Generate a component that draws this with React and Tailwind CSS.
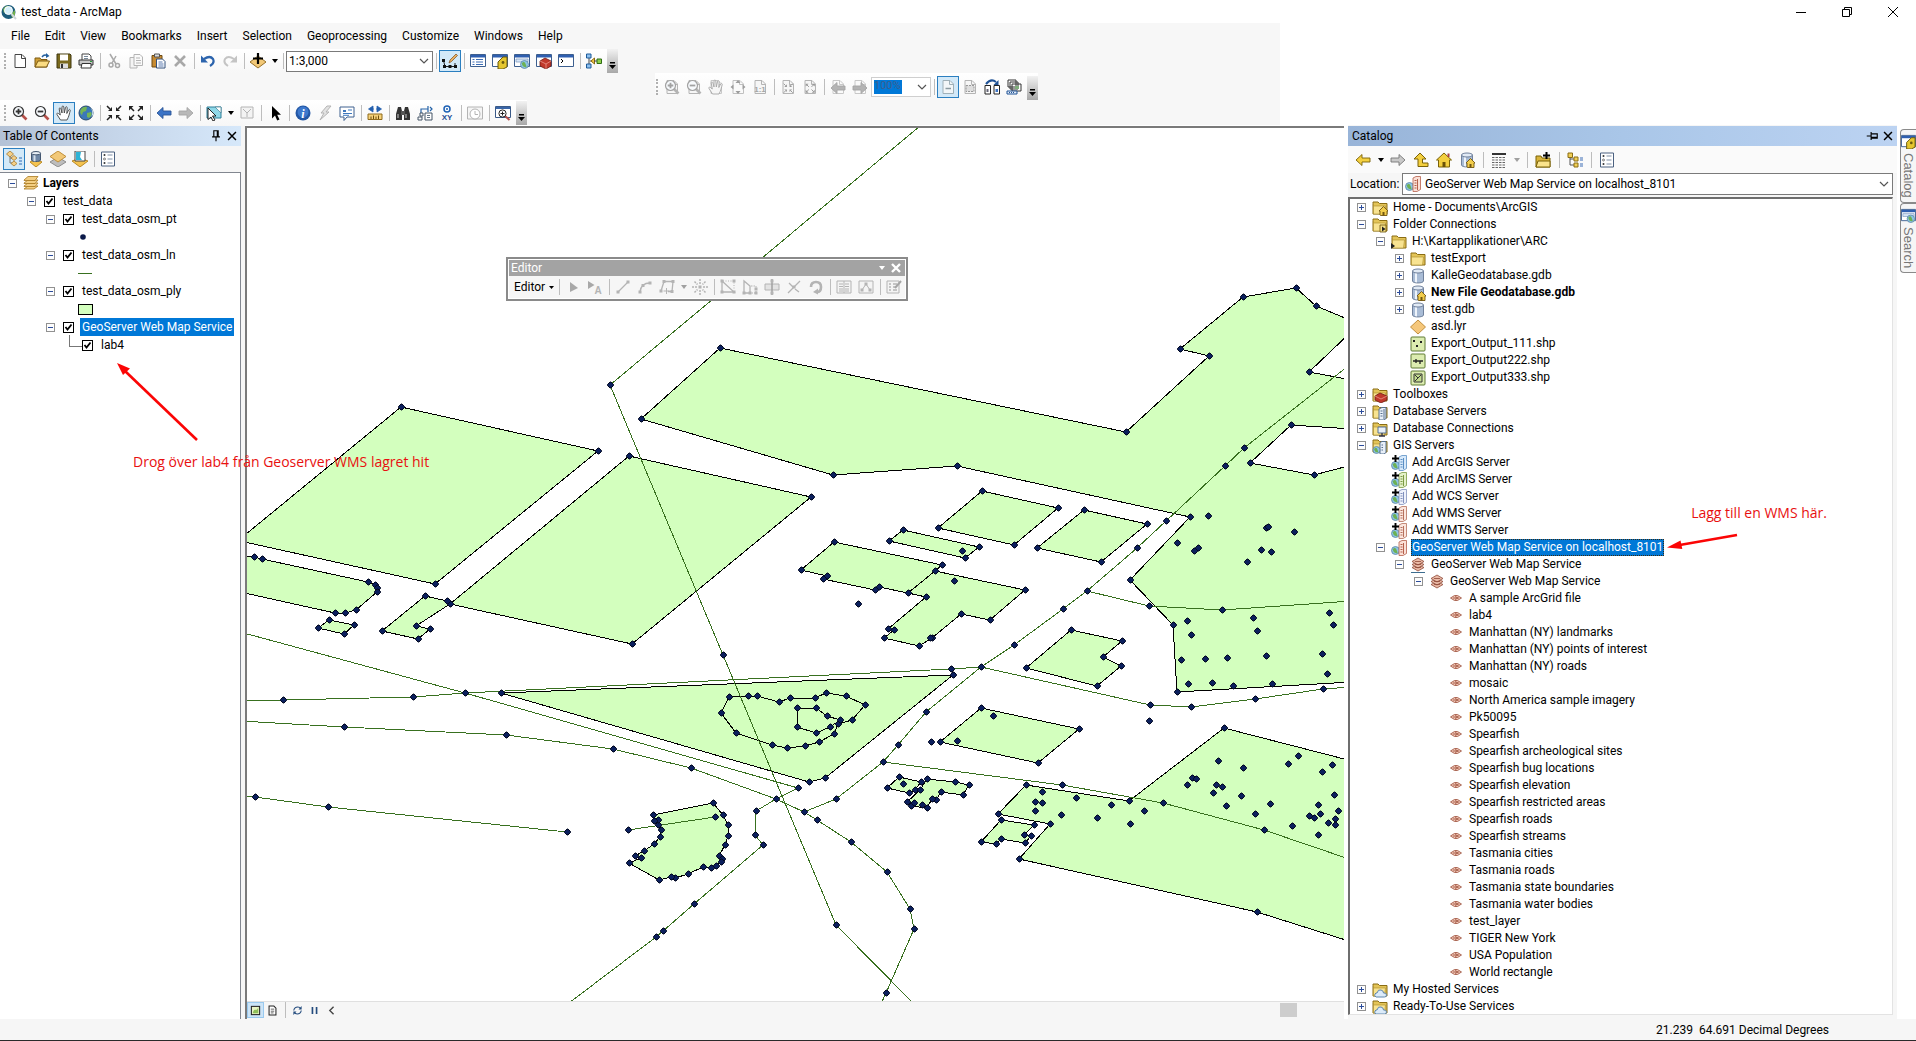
import React from "react";

/* ---------- icons ---------- */

const page = (c = "#555", f = "#fff") => (
  <>
    <path d="M3 1.5h7l3.500 3.500v9.500H3z" fill={f} stroke={c} />
    <path d="M9.500 1.500v4h4" fill="none" stroke={c} />
  </>
);
const win = (
  <>
    <path d="M.5 1.500h15v12H.5z" fill="#fff" stroke="#3d5f8f" />
    <path d="M1 2h14v2.500H1z" fill="#2f5fb0" />
  </>
);
const folder = (
  <>
    <path d="M1 3.500V2h5l1.500 1.500H15V14H1z" fill="#e3c458" stroke="#8a6d14" />
    <path d="M1.500 6h12l-1 8H1.500z" fill="#f8e391" stroke="#a88a2a" strokeWidth=".6" />
  </>
);
const cylinder = (
  <>
    <path d="M2.500 3v10c0 2.600 11 2.600 11 0V3z" fill="#a9bcd6" stroke="#70819c" />
    <path d="M5 5v9l2 .5V5z" fill="#eef4fb" />
    <ellipse cx="8" cy="3" rx="5.500" ry="2" fill="#e1eaf5" stroke="#70819c" />
  </>
);
const house = (
  <>
    <path d="M8 15V11h-1l4.500-4.500L16 11h-1v4.500H8.500z" fill="#f2cd4b" stroke="#705510" strokeWidth=".9" />
    <path d="M10.500 12h2v3.500h-2z" fill="#705510" />
  </>
);
const globeAt = (cx, cy, r) => (
  <>
    <circle cx={cx} cy={cy} r={r} fill="#8cc3e6" stroke="#5d86a3" strokeWidth=".8" />
    <path d={`M${cx - r * 0.7} ${cy - r * 0.3}q${r * 0.6} ${-r * 0.7} ${r * 0.9} 0t${r * 0.3} ${r * 0.9}q${-r * 0.9} ${r * 0.3} ${-r * 1.2} ${-r * 0.9}`} fill="#6db154" />
  </>
);
const server = (fill, line) => (
  <>
    {globeAt(4.5, 10.5, 4)}
    <path d="M8 2l3-1.500h4.500v13L12 15.500H8z" fill={fill} stroke={line} strokeWidth=".8" />
    <path d="M12.500 3v11M9.500 4.500h2M9.500 7h2M9.500 9.500h2M9.500 12h2" stroke={line} fill="none" />
  </>
);
const plus = <path d="M4.500 0v7M1 3.500h7" stroke="#000" strokeWidth="1.900" fill="none" />;
const lens = (sign, c = "#333", h = "#b5504a") => (
  <>
    <path d="M10 10l4.500 4.500" stroke={h} strokeWidth="2.600" />
    <circle cx="6.500" cy="6.500" r="5" fill="#f7fafd" stroke={c} strokeWidth="1.200" />
    <path d={sign === "+" ? "M6.500 3.700v5.600M3.700 6.500h5.600" : "M3.700 6.500h5.600"} stroke={c} strokeWidth="1.800" />
  </>
);
const handPath = "M4.500 15L1 9.500c-.6-1.300.8-1.800 1.500-1L4.300 10 3.200 4c-.2-1.400 1.400-1.500 1.700-.3L6 8 6 2c0-1.300 1.700-1.300 1.800 0L8.300 8 9.500 2.500c.3-1.200 1.800-.9 1.700.4L10.800 8.500 12.600 5c.6-1.100 1.900-.5 1.600.6-.7 2.700-1.200 5.900-3.200 9.400z";
const arrowL = (f, s) => <path d="M1 8l6-5.500V6h8v4H7v3.500z" fill={f} stroke={s} strokeWidth=".9" />;
const arrowR = (f, s) => <path d="M15 8L9 2.500V6H1v4h8v3.500z" fill={f} stroke={s} strokeWidth=".9" />;
const inArrows = (c) => (
  <g stroke={c} fill={c} strokeWidth="1.500">
    <path d="M1 1l3 3M15 1l-3 3M1 15l3-3M15 15l-3-3" />
    <path d="M6 2v4H2zM10 2v4h4zM6 14v-4H2zM10 14v-4h4z" stroke="none" />
  </g>
);
const outArrows = (c) => (
  <g stroke={c} fill={c} strokeWidth="1.500">
    <path d="M3 3l3 3M13 3l-3 3M3 13l3-3M13 13l-3-3" />
    <path d="M1 1h4.500L1 5.500zM15 1h-4.500L15 5.500zM1 15h4.500L1 10.500zM15 15h-4.500L15 10.500z" stroke="none" />
  </g>
);
const G = "#b4b4b4";
const nodes = (pts, c = G) => pts.map(([x, y]) => <rect key={`${x}-${y}`} x={x - 1.5} y={y - 1.5} width="3" height="3" fill={c} />);
const stack = (
  <g fill="#e9b9a6" stroke="#8f4a38" strokeWidth=".8">
    <path d="M2 10.500l6-3 6 3-6 3.500z" />
    <path d="M2 7.500l6-3 6 3L8 11z" />
    <path d="M2 4.500l6-3.500 6 3.500L8 8z" />
    <path d="M5 4.500h6M5 7.500h6M5 10.500h6" />
  </g>
);

const ICONS = {
  app: (
    <>
      <circle cx="7.500" cy="8" r="7" fill="#1c5c7c" />
      <path d="M2 5q3-4 6-3l-2 4-3 3zM10 10l4-4v5l-3 3z" fill="#6fae4c" />
      <circle cx="7.500" cy="6.500" r="4" fill="#d4effa" stroke="#fff" />
      <path d="M10.500 10l4.500 5" stroke="#cfd6da" strokeWidth="2" />
    </>
  ),
  fresh: page("#444"),
  open: (
    <>
      <path d="M1 14V5h5l1 1.500h6V14z" fill="#cf9f35" stroke="#7c5a13" />
      <path d="M1 14l3-6h11.500l-3 6z" fill="#fbdc82" stroke="#7c5a13" />
      <path d="M8 4q2-3 5-1.500" fill="none" stroke="#235f9e" strokeWidth="1.400" />
      <path d="M12 0l3.500 3L12 5z" fill="#235f9e" />
    </>
  ),
  save: (
    <>
      <path d="M1 1h13l1 1v13H1z" fill="#7b6a1e" stroke="#3f3710" />
      <path d="M4 1.500h8v6H4z" fill="#fff" />
      <path d="M4 10.500h8V15H4z" fill="#ddd" />
      <path d="M5 11h2v4H5z" fill="#333" />
    </>
  ),
  print: (
    <>
      <path d="M4 1h7l2 2v5H4z" fill="#fff" stroke="#444" />
      <path d="M1 7h14v5H1z" fill="#c9c9c9" stroke="#333" />
      <path d="M4 10.500h9v4.500H3z" fill="#fff" stroke="#333" />
      <path d="M12 8.500h2" stroke="#2a9d3a" />
      <path d="M6 3.500h4M6 5.500h4" stroke="#789" />
    </>
  ),
  cut: (
    <g stroke="#a9a9a9" fill="none" strokeWidth="1.500">
      <path d="M4 1l6 10M10 3L6 10" />
      <circle cx="5" cy="12" r="2" />
      <circle cx="11.500" cy="12.500" r="2" />
    </g>
  ),
  copy: (
    <>
      <path d="M2 4.500h7V15H2z" fill="#f4f4f4" stroke={G} />
      <path d="M6 1.500h6l2.500 2.500v8.500H6z" fill="#fafafa" stroke={G} />
      <path d="M8 5h4M8 7.500h5M8 10h5" stroke={G} />
    </>
  ),
  paste: (
    <>
      <path d="M2 2.500h10V14H2z" fill="#c78b32" stroke="#6e4a12" />
      <path d="M4.500 1h5v3h-5z" fill="#ddd" stroke="#555" />
      <path d="M6.500 6h6l2.500 2.500V15H6.500z" fill="#fff" stroke="#33507c" />
      <path d="M8.500 9h4M8.500 11h5M8.500 13h5" stroke="#5a7bb0" />
    </>
  ),
  del: <path d="M3 3l10 10M13 3L3 13" stroke="#a8a8a8" strokeWidth="2.600" />,
  undo: (
    <>
      <path d="M4 6q6-4 9 0 2 4-3 7" fill="none" stroke="#2c64ad" strokeWidth="2.200" />
      <path d="M1 2.500v7h7z" fill="#2c64ad" />
    </>
  ),
  redo: (
    <>
      <path d="M12 6Q6 2 3 6q-2 4 3 7" fill="none" stroke="#c4c4c4" strokeWidth="2" />
      <path d="M15 2.500v7H8z" fill="#c4c4c4" />
    </>
  ),
  add: (
    <>
      <path d="M8 3l8 6-8 6-8-6z" fill="#f2c877" stroke="#96702a" />
      <path d="M8 0v11M3 5.500h10" stroke="#000" strokeWidth="2.200" />
    </>
  ),
  editorToggle: (
    <>
      <path d="M1.500 7.500l1.500 6h10V10" fill="none" stroke="#222" />
      {nodes([[1.5, 7.5], [2.5, 13.5], [8, 13.5], [13.5, 13.5]], "#111")}
      <path d="M7 10l1-3 6-6 1.500 1.500-6 6z" fill="#eab060" stroke="#7a4a1c" strokeWidth=".7" />
    </>
  ),
  winToc: (
    <>
      {win}
      <path d="M2.500 6.500h2M2.500 9h2M2.500 11.500h2M6 6.500h7M6 9h7M6 11.500h7" stroke="#3c6db5" />
    </>
  ),
  winCat: (
    <>
      {win}
      <path d="M6 9l5-5h4v10l-4 2H6z" fill="#e5c62e" stroke="#6b5a0c" />
      <circle cx="11" cy="9.500" r="1.400" fill="#6b5a0c" />
    </>
  ),
  winSearch: (
    <>
      {win}
      <path d="M2 6h12v3H2z" fill="#d7e6f8" stroke="#7a96bd" strokeWidth=".7" />
      {globeAt(10.5, 11.5, 4)}
    </>
  ),
  winBox: (
    <>
      {win}
      <path d="M4 8l5-3 6 3v5l-5 3-6-3z" fill="#c0392b" stroke="#6f1b12" strokeWidth=".8" />
      <path d="M4 8l6 3 5-3M10 11v5" stroke="#f0a49a" fill="none" strokeWidth=".7" />
    </>
  ),
  winPy: (
    <>
      {win}
      <path d="M3 6l2 2-2 2" fill="none" stroke="#000" />
    </>
  ),
  model: (
    <>
      <path d="M3 3v10M4 8h3" stroke="#444" fill="none" />
      <path d="M.5 1h4.500v4H.5zM.5 11h4.500v4H.5z" fill="#8ec0ee" stroke="#1d5a99" />
      <path d="M5 8l3.500-3v6z" fill="#f5c945" stroke="#8a6a10" />
      <path d="M8 8h3" stroke="#444" />
      <path d="M11 6h4.500v4.500H11z" fill="#8fd14a" stroke="#2f6d12" />
    </>
  ),
  zin: lens("+"),
  zout: lens("-"),
  hand: <path d={handPath} fill="#fff" stroke="#444" strokeWidth=".9" />,
  globe: (
    <>
      <circle cx="8" cy="8" r="7" fill="#3c78b8" stroke="#27496b" />
      <path d="M3 4q3-3 6-2l-1 4-3 1-1 3q-3-2-1-6zM9 8l4-1q2 3-2 6l-2-1z" fill="#74b555" />
      <path d="M12 2q4 5 1 10l2-2q1-5-3-8z" fill="#cfe6f8" />
    </>
  ),
  fin: inArrows("#222"),
  fout: outArrows("#222"),
  backBlue: arrowL("#3c74c6", "#2a5596"),
  fwdGrey: arrowR("#b9b9b9", "#a5a5a5"),
  selFeat: (
    <>
      <path d="M1 2h14v11H1z" fill="#8fd8e8" stroke="#2f7f98" />
      <path d="M9 2l6 0v6z" fill="#fff" stroke="#3f7f94" strokeWidth=".7" />
      <path d="M2 3l8 8H6.500L9 15l-2 1-2-4-3 2.500z" fill="#fff" stroke="#111" strokeWidth=".9" />
    </>
  ),
  clearSel: (
    <>
      <path d="M2 2h12v11H2z" fill="#f3f3f3" stroke={G} />
      <path d="M4 4l4 4v4M12 4L8 8" stroke={G} fill="none" />
    </>
  ),
  pointer: <path d="M5 1v12.500l3-3 2.200 5 2.300-1-2.300-4.700H14z" fill="#000" />,
  info: (
    <>
      <circle cx="8" cy="8" r="7.500" fill="#2357a5" />
      <circle cx="8" cy="7" r="5.500" fill="#3d78cc" />
      <text x="8" y="12.500" textAnchor="middle" fontSize="12" fontStyle="italic" fontWeight="bold" fill="#fff" fontFamily="Liberation Serif">i</text>
    </>
  ),
  bolt: <path d="M10 1L4 8h3l-4 7 9-8H9l5-6z" fill="#e2e2e2" stroke={G} />,
  popup: (
    <>
      <path d="M1 2h14v10H8l-3 3.500V12H1z" fill="#fff" stroke="#3f618f" />
      <path d="M4 5h3v2H4z" fill="#3f78bd" />
      <path d="M9 5h4M4 8.500h9M4 10.300h6" stroke="#3f78bd" />
    </>
  ),
  measure: (
    <>
      <path d="M1 9h14v5.500H1z" fill="#f6d27a" stroke="#8f6a1a" />
      <path d="M4 14v-2.500M6.500 14v-3.500M9 14v-2.500M11.500 14v-3.500" stroke="#6d4d0c" />
      <path d="M6 1L1.500 4 6 7zM10 1l4.500 3L10 7zM5 4h2M9 4h2" fill="#235fae" stroke="#235fae" strokeWidth=".8" />
    </>
  ),
  bino: (
    <>
      <path d="M3 2h3l1 4v9H1V9zM13 2h-3L9 6v9h6V9z" fill="#333" />
      <path d="M6 6h4v4H6z" fill="#555" />
      <path d="M3 9v4M11 9v4" stroke="#ccc" />
    </>
  ),
  route: (
    <>
      <path d="M4 8V4h7M11 1v6M13 2l2 2-2 2" fill="none" stroke="#2563a8" strokeWidth="1.200" />
      <path d="M3 8h3v3H3zM8 8h7v7H8zM1 12h4v3H1z" fill="#fff" stroke="#456" />
      <path d="M10 10.500h3M10 12.500h3" stroke="#678" />
    </>
  ),
  xy: (
    <>
      <circle cx="8" cy="4" r="3" fill="#fff" stroke="#1f62b5" strokeWidth="1.500" />
      <circle cx="8" cy="4" r="1" fill="#1f62b5" />
      <text x="8" y="14.500" textAnchor="middle" fontSize="8" fontWeight="bold" fill="#1f4f97" fontFamily="Liberation Sans">XY</text>
    </>
  ),
  time: (
    <>
      <path d="M.5 2h15v12H.5z" fill="#f5f5f5" stroke={G} />
      <circle cx="8" cy="9" r="5" fill="#fff" stroke={G} />
      <path d="M8 6v3.500h3" stroke={G} fill="none" />
    </>
  ),
  viewer: (
    <>
      <path d="M.5 1.500h15v11H.5z" fill="#fff" stroke="#3a5a88" />
      <path d="M1 2h14v2H1z" fill="#3a66a8" />
      <path d="M10 11l4.500 4" stroke="#b5504a" strokeWidth="2" />
      <circle cx="7.500" cy="8.500" r="3.600" fill="#fff" stroke="#222" />
      <path d="M7.500 6.500v4M5.500 8.500h4" stroke="#222" />
    </>
  ),
  pzin: (<>{page(G, "#f6f6f6")}{lens("+", "#a2a2a2", G)}</>),
  pzout: (<>{page(G, "#f6f6f6")}{lens("-", "#a2a2a2", G)}</>),
  pHand: (<>{page("#c8c8c8", "#fafafa")}<path d={handPath} fill="#f6f6f6" stroke="#a5a5a5" strokeWidth=".9" /></>),
  pFull: (<>{page("#c0c0c0", "#fafafa")}<path d="M8 1l2.500 3h-5zM8 15l2.500-3h-5zM.5 8l3-2.500v5zM15.500 8l-3-2.500v5z" fill="#9d9d9d" /></>),
  pOne: (<>{page(G, "#f6f6f6")}<text x="8" y="13" textAnchor="middle" fontSize="8" fontWeight="bold" fill="#a5a5a5" fontFamily="Liberation Sans">1:1</text></>),
  pIn: (<>{page(G, "#f6f6f6")}<g transform="translate(3 4) scale(.65)">{inArrows("#999")}</g></>),
  pOut: (<>{page(G, "#f6f6f6")}<g transform="translate(3 4) scale(.65)">{outArrows("#999")}</g></>),
  pBack: (<>{page("#c8c8c8", "#fafafa")}<g transform="translate(0 1)">{arrowL(G, "#a5a5a5")}</g></>),
  pFwd: (<>{page("#c8c8c8", "#fafafa")}<g transform="translate(0 1)">{arrowR(G, "#a5a5a5")}</g></>),
  draft: (<>{page("#9fb0b8", "#f2f6f8")}<path d="M5.500 9.500h5.500" stroke="#8b9aa1" strokeWidth="1.500" /></>),
  focus: (<>{page(G, "#f6f6f6")}<path d="M4 6.500h8v6H4z" fill="#ddd" stroke="#999" strokeDasharray="2 1" /></>),
  change: (
    <>
      <path d="M1 6.500h5.500V15H1zM10 6.500h5.500V15H10z" fill="#fff" stroke="#222" />
      <path d="M2.500 10h2v3h-2z" fill="#667" />
      <path d="M11.500 10h2.500v3h-2.500z" fill="#3c74c6" />
      <path d="M2 5q5-6 10-2" fill="none" stroke="#1f5296" strokeWidth="2" />
      <path d="M14.500 1v5H9.500z" fill="#1f5296" />
    </>
  ),
  ddp: (
    <>
      <path d="M2 1h8v7H2zM4 3h8v7H4zM6 5h9v7H6z" fill="#fff" stroke="#333" />
      <path d="M9 7h4v3H9z" fill="#7fae7a" />
      <path d="M1 12h10v3H1z" fill="#e4edf8" stroke="#1f5296" />
      <path d="M3 13.500h1M5 13.500h1M7 13.500h1" stroke="#1f5296" />
    </>
  ),
  eArrow: <path d="M5 3v10l8-4z" fill="#a8a8a8" />,
  eText: (
    <>
      <path d="M1 2v8l6.500-4z" fill="#a8a8a8" />
      <text x="11" y="15" textAnchor="middle" fontSize="10" fontWeight="bold" fill="#b4b4b4" fontFamily="Liberation Sans">A</text>
    </>
  ),
  eLine: (<><path d="M3 13L13 3" stroke={G} strokeWidth="1.300" />{nodes([[3, 13], [13, 3]])}</>),
  eArc: (<><path d="M3 13q1-9 10-9" fill="none" stroke={G} strokeWidth="1.300" />{nodes([[3, 13], [6, 6.5], [13, 4]])}</>),
  ePoly: (<><path d="M2 12L5 2.500h9l-1 10H9" fill="none" stroke={G} strokeWidth="1.300" />{nodes([[5, 2.5], [14, 2.5], [13, 12.5], [2, 12]])}<path d="M7.500 9v6M4.500 12h6" stroke={G} /></>),
  ePoint: (<><path d="M8 0v5M8 11v5M0 8h5M11 8h5M2.500 2.500l3 3M13.500 2.500l-3 3M2.500 13.500l3-3M13.500 13.500l-3-3" stroke={G} strokeDasharray="2 1" strokeWidth="1.500" />{nodes([[8, 8]])}</>),
  eVert: (<><path d="M2 2l12 11H2z" fill="none" stroke={G} strokeWidth="1.300" /><path d="M3 2h11v9" fill="none" stroke={G} strokeDasharray="1 1.500" />{nodes([[2, 2], [14, 13], [2, 13], [14, 2]])}</>),
  eReshape: (<><path d="M2 14V2l6 5v7z" fill="none" stroke={G} strokeWidth="1.300" /><path d="M9 7h5v7H9" fill="none" stroke={G} strokeDasharray="1.500 1" />{nodes([[2, 14], [8, 14], [14, 10], [14, 14]])}</>),
  eCut: (<><path d="M1 5h14v6H1z" fill="#e3e3e3" stroke={G} /><path d="M8 0v16" stroke="#a0a0a0" strokeWidth="1.500" />{nodes([[8, 2], [8, 14]])}</>),
  eSplit: (<><path d="M2 14L14 2M3 4l4 4M9 10l4 3" stroke={G} strokeWidth="1.300" />{nodes([[8, 8]])}</>),
  eRotate: (<><path d="M3 8q0-5 5-5t5 5-4 5" fill="none" stroke={G} strokeWidth="2.600" /><path d="M10 9.500v6L5 13z" fill={G} /></>),
  eAttr: (<><path d="M1 2h14v12H1z" fill="#f4f4f4" stroke={G} /><path d="M3 5h4M3 7.500h4M3 10h4M3 12h4M9 5h4M9 7.500h4M9 10h4M9 12h4" stroke={G} /><path d="M8 2v12" stroke={G} /></>),
  eSketch: (<><path d="M1 2h14v12H1z" fill="#f4f4f4" stroke={G} /><path d="M4 11l4-6 4 6" fill="none" stroke={G} />{nodes([[4, 11], [8, 5], [12, 11]])}</>),
  eCreate: (<><path d="M1 2h12v12H1z" fill="#f4f4f4" stroke={G} /><path d="M3 5h2M3 8h2M3 11h2M7 5h4M7 8h3M7 11h4" stroke={G} strokeWidth="1.500" /><path d="M9 9l6-7" stroke="#a5a5a5" strokeWidth="2" /></>),
  listBy: (
    <>
      <path d="M4 4v8h4M4 7l5 0" fill="none" stroke="#777" />
      <path d="M4 0l3.500 3L4 6 .5 3zM8 4.500l3 2.500-3 2.500L5 7zM8 10l3 2.500L8 15l-3-2.500z" fill="#f4cf87" stroke="#a77a2d" strokeWidth=".8" />
      <path d="M13 7h3M13 10h3M13 13h3" stroke="#2d69b5" strokeWidth="1.200" />
    </>
  ),
  listSource: (
    <>
      <path d="M2 11l6-3 6 3-6 5z" fill="#f4c24f" stroke="#b98a25" />
      <path d="M3.500 2v7c0 2 9 2 9 0V2z" fill="#6e86a5" stroke="#43566f" />
      <path d="M5.500 4v6l2 .5V4z" fill="#d3deea" />
      <ellipse cx="8" cy="2.200" rx="4.500" ry="1.700" fill="#e8eef5" stroke="#43566f" />
    </>
  ),
  listVis: (
    <>
      <path d="M8 6l8 5-8 5-8-5z" fill="#bdbdbd" stroke="#8d8d8d" />
      <path d="M8 0l8 5.500L8 11 0 5.500z" fill="#f2c877" stroke="#c08f3a" />
    </>
  ),
  listSel: (
    <>
      <path d="M0 10l8-3 8 3-8 6z" fill="#f4c24f" stroke="#b98a25" />
      <path d="M3 0h10v10H3z" fill="#fff" stroke="#444" />
      <path d="M4 1h5l-1 5 2 3H4z" fill="#2eb3d6" />
    </>
  ),
  options: (
    <>
      <path d="M1.500 1h13v14h-13z" fill="#fff" stroke="#4b6180" />
      <circle cx="4.500" cy="4" r="1" fill="#333" />
      <circle cx="4.500" cy="8" r="1" fill="none" stroke="#333" strokeWidth=".6" />
      <circle cx="4.500" cy="12" r="1" fill="#333" />
      <path d="M7.500 4h5M7.500 8h5M7.500 12h5" stroke="#7f8fa6" />
    </>
  ),
  layers: (
    <g fill="#f3cf84" stroke="#a8781f" strokeWidth=".8">
      <path d="M1 14l4-3h10l-4 3z" />
      <path d="M1 11l4-3h10l-3 3.500H1z" />
      <path d="M1 8l4-3h10l-3 3.500H1z" />
      <path d="M1 5l4-3.500h10L12 5.500H1z" />
    </g>
  ),
  cBack: arrowL("#f3cf3f", "#7a6208"),
  cFwd: arrowR("#c9c9c9", "#777"),
  cUp: <path d="M7 1l6 6H9.500v4H15v3.500H5V7H1z" fill="#f3cf3f" stroke="#7a6208" />,
  cHome: (
    <>
      <path d="M2.500 15V8H.5L8 1l7.500 7h-2v7z" fill="#f3cf3f" stroke="#7a6208" />
      <path d="M11.500 1.500h2V5h-2z" fill="#a44" />
      <path d="M6.500 10h3v5h-3z" fill="#6b5208" />
    </>
  ),
  cGdb: (<>{cylinder}{house}</>),
  table: (
    <>
      <path d="M1 2h14" stroke="#333" strokeWidth="2" />
      <path d="M1 5.500h14M1 8h14M1 10.500h14M1 13h14M1 15.500h14" stroke="#666" strokeDasharray="2.500 1" />
    </>
  ),
  connect: (
    <>
      <path d="M1 4h5l1 2h8v9H1z" fill="#d9b43b" stroke="#7a6208" />
      <path d="M1 15l2-6h12v6z" fill="#fbe48c" stroke="#7a6208" />
      <path d="M11.500 0v7M8 3.500h7" stroke="#000" strokeWidth="2" />
    </>
  ),
  treeView: (
    <>
      <path d="M3 5v8h4M3 7h4" stroke="#555" fill="none" />
      <path d="M1 1h4.500v4.500H1zM7 5h4v4H7zM7 11h4v4H7z" fill="#f0cf55" stroke="#8a6d14" />
      <path d="M13 6h3M13 8h3M13 12h3M13 14h3" stroke="#3c6db5" />
    </>
  ),
  fHome: (<>{folder}{house}</>),
  fConn: (<>{folder}<path d="M8 8h6v7H8z" fill="#f3df86" stroke="#6b5208" strokeWidth=".8" /><path d="M10 9.500v5l3.500-2.500z" fill="#222" /></>),
  fLink: (<>{folder}<path d="M0 9v6l4-3z" fill="#222" /></>),
  folder,
  gdb: cylinder,
  gdbHome: (<>{cylinder}{house}</>),
  lyr: <path d="M8 1l7.500 7L8 15 .5 8z" fill="#f5c77b" stroke="#c18f3c" />,
  shpPt: (<><rect x="1" y="1" width="14" height="14" rx="1" fill="#dcecb0" stroke="#5f7a35" /><path d="M3 4h2v2H3zM10 5h2v2h-2zM6 9h2v2H6z" fill="#222" /></>),
  shpLn: (<><rect x="1" y="1" width="14" height="14" rx="1" fill="#dcecb0" stroke="#5f7a35" /><path d="M3 8h10M6 6v4M10 8v3" stroke="#222" strokeWidth="1.300" /></>),
  shpPly: (<><rect x="1" y="1" width="14" height="14" rx="1" fill="#dcecb0" stroke="#5f7a35" /><path d="M4 4h8v8H4zM5 11l6-6M5 5l3 3" fill="#c2dc8e" stroke="#333" /></>),
  fBox: (<>{folder}<path d="M3 9l5-3 7 3v4l-6 3-6-3z" fill="#c0392b" stroke="#6f1b12" strokeWidth=".8" /><path d="M3 9l6 3 6-3" stroke="#f0a49a" fill="none" strokeWidth=".7" /></>),
  fServ: (<>{folder}<path d="M7 5l3-1.500h4v11l-2 1.500H7z" fill="#e8eff8" stroke="#56708f" /><path d="M8.500 7h2M8.500 9.500h2M8.500 12h2M12 5v10" stroke="#56708f" /></>),
  fConn2: (<>{folder}<path d="M6 6h8v6H6z" fill="#e8eff8" stroke="#56708f" /><path d="M10 12v3M7 15h6" stroke="#334" strokeWidth="1.300" /></>),
  fGis: (<>{folder}<path d="M8 4.500l2-1h4v11l-2 1.500H8z" fill="#e8eff8" stroke="#56708f" /><path d="M9.500 7h1.500M9.500 9.500h1.500M9.500 12h1.500" stroke="#56708f" />{globeAt(4.5, 12, 3.5)}</>),
  sBlue: (<>{server("#d7e9fa", "#5b8fc4")}{plus}</>),
  sGreen: (<>{server("#e4f1c8", "#7c9a45")}{plus}</>),
  sWhite: (<>{server("#edf1fb", "#8190bd")}{plus}</>),
  sRed: (<>{server("#fbe6de", "#b5705c")}{plus}</>),
  wms: server("#fbe0d6", "#b5604c"),
  stackNet: (<>{stack}<path d="M1 15.500h14" stroke="#3c6d8f" /></>),
  stack,
  layer: (
    <g fill="#f0c4b3" stroke="#a35b48" strokeWidth=".9">
      <path d="M2.500 7L6.500 4.500h3L13.500 7l-4 2.500h-3z" />
      <path d="M5 7h6M7 5.500l3 1.500-3 1.500" fill="none" />
    </g>
  ),
  fCloud: (<>{folder}<path d="M4 15q-2-1-1-3 1-1.500 2-1 1-4 4-3 2.500.5 2.500 3 3-.5 3 2 0 2-2 2z" fill="#dcebf9" stroke="#5f86ad" /></>),
  dataView: (<><rect x="2" y="2" width="12" height="12" fill="#e9f3c5" stroke="#222" strokeWidth="1.500" /><path d="M4 12q1-6 4-5t4-4v9z" fill="#8fbf5a" /></>),
  layoutView: (<><path d="M3 1.500h7l3 3v10H3z" fill="#fff" stroke="#222" strokeWidth="1.500" /><path d="M5.500 6h5M5.500 9h5M5.500 11.500h4" stroke="#222" /></>),
  refresh: (<><path d="M2.500 8q1-5 6-5 3 0 4 2M13.500 8q-1 5-6 5-3 0-4-2" fill="none" stroke="#234b7d" strokeWidth="1.600" /><path d="M14 1.500v5H9.500zM2 14.500v-5h4.500z" fill="#234b7d" /></>),
  pause: <path d="M5 3v10M11 3v10" stroke="#234b7d" strokeWidth="2.400" />,
  left: <path d="M11 2.500L5.500 8l5.500 5.500" fill="none" stroke="#444" strokeWidth="2" />,
  pin: <path d="M5.500 2h5v7h-5zM9.500 2v7M3.500 9h9M8 9v5" fill="none" stroke="#000" strokeWidth="1.300" />,
  pinSide: <path d="M14 5.500v5H7v-5zM14 9.500H7M7 3.500v9M7 8H2" fill="none" stroke="#000" strokeWidth="1.300" />,
  close: <path d="M3.500 3.500l9 9M12.500 3.500l-9 9" stroke="#000" strokeWidth="1.700" />,
  chevron: <path d="M4 6l4 4 4-4" fill="none" stroke="#555" strokeWidth="1.200" />,
};

function Icon({ n, s = 16 }) {
  return (
    <svg width={s} height={s} viewBox="0 0 16 16" className="shrink-0" aria-hidden="true">
      {ICONS[n]}
    </svg>
  );
}

/* ---------- toolbar pieces ---------- */

const Tool = ({ n, on }) => (
  <button aria-label={n} className={on ? "flex h-[22px] w-[22px] shrink-0 items-center justify-center border border-[#2b7fc0] bg-[#d3e9f8]" : "flex h-[22px] w-[22px] shrink-0 items-center justify-center"}>
    <Icon n={n} />
  </button>
);
const Sep = ({ wide }) => (
  <span className={wide ? "flex h-4 w-2 shrink-0 justify-center" : "flex h-4 w-[6px] shrink-0 justify-center"}>
    <span className="w-px bg-[#bdbdbd]" />
  </span>
);
const Caret = ({ c = "#000" }) => (
  <button aria-label="More" className="flex w-[11px] shrink-0 items-center justify-center">
    <svg width="6" height="4" viewBox="0 0 6 4"><path d="M0 0h6L3 4z" fill={c} /></svg>
  </button>
);
const Grip = () => <span className="mr-0.5 h-4 w-[3px] shrink-0 border-l-2 border-dotted border-[#b0b0b0]" />;
const Overflow = () => (
  <button aria-label="Toolbar options" className="ml-0.5 flex h-6 w-[11px] shrink-0 items-end justify-center self-end bg-gradient-to-b from-[#f2f2f2] to-[#a8a8a8] pb-1">
    <svg width="7" height="7" viewBox="0 0 7 7"><path d="M1 0h5v1.500H1zM0 3h7L3.500 7z" fill="#000" /></svg>
  </button>
);
const Tools = ({ items }) =>
  items.map((it, i) => {
    if (it === "|") return <Sep key={i} />;
    if (it === "||") return <Sep key={i} wide />;
    if (it === "v") return <Caret key={i} />;
    if (it === "w") return <Caret key={i} c="#a0a0a0" />;
    return it[0] === "*" ? <Tool key={i} n={it.slice(1)} on /> : <Tool key={i} n={it} />;
  });

/* ---------- map data ---------- */

const POLYGONS = [
  "401,407 598,451 435,584 240,541 240,539",
  "629,456 811,497 632,644 450,604",
  "425,596 447,601 450,604 416,626 430,629 418,639 382,631",
  "240,556 254,557 262,559 368,582 375,585 377,588 377,592 356,610 345,613 335,613 240,592",
  "329,620 354,625 344,634 318,628",
  "501,693 953,675 825,778 809,782",
  "713,803 723,815 728,825 728,836 725,845 719,856 722,859 721,862 716,866 711,868 703,867 688,874 675,878 671,877 659,880 629,863 641,858 635,856 644,851 654,844 660,837 661,830 658,825 658,820 654,821 653,815",
  "641,419 720,348 1126,432 1209,356 1180,349 1243,297 1296,288 1316,306 1352,321 1352,331 1309,372 1352,380 1352,429 1291,425 1250,463 1314,475 1352,465 1352,682 1177,692 1173,625 1130,580 1190,517 957,466 833,475",
  "982,491 1058,508 1014,545 938,528",
  "1084,510 1147,524 1101,562 1037,548",
  "903,530 979,547 965,558 889,541",
  "834,542 942,565 935,571 908,593 879,587 875,590 823,579 827,576 801,570",
  "935,571 1025,590 990,620 961,614 932,638 919,646 884,638 894,630 888,629 926,597 908,593",
  "1071,630 1122,641 1103,657 1121,666 1097,686 1026,668",
  "981,708 1079,729 1038,763 940,742",
  "1026,785 1129,801 1224,728 1352,761 1352,942 1257,912 1019,859 1050,824 998,814",
  "1001,820 1034,825 1024,835 1031,836 1025,843 1001,839 996,844 981,842",
  "899,777 921,782 915,790 909,793 887,788",
  "927,779 955,782 969,785 963,795 941,792 936,800 932,799 927,808 911,806 914,803 907,802 920,790",
  "729,697 748,696 757,696 779,702 790,698 815,698 826,693 846,696 865,705 852,720 838,724 834,734 819,742 805,746 787,748 772,745 736,733 721,713",
  "797,708 816,708 827,716 840,720 830,727 816,733 797,727",
];
const LINES = [
  "920,126 610,385 723,655 836,925 916,1006",
  "240,632 465,693 798,788 776,799 756,811 755,835 763,845 694,904 663,931 656,937 565,1006",
  "240,700 283,700 413,697 465,693 951,669 981,667 1150,705 1191,707 1255,699 1323,689 1352,687",
  "240,721 344,727 506,735 613,749 691,768 776,799 804,812 817,820 851,842 887,872 910,909 914,929 886,993 880,1006",
  "240,796 255,797 328,807 567,832",
  "628,830 715,817",
  "1352,363 1244,448 1225,466 1166,521 1137,548 1087,591 1063,609 1014,645 981,667 926,712 898,745 883,762 836,799 804,812",
  "1087,591 1149,606 1222,610 1352,601",
  "883,762 1062,785 1163,803 1264,830 1352,860",
];
const LOOSE =
  "962,551 954,581 858,604 930,638 993,716 957,741 931,742 903,784 922,805 1208,516 1177,543 1194,551 1198,548 1266,528 1268,527 1294,532 1261,550 1271,552 1247,562 1187,621 1191,635 1253,618 1257,631 1329,613 1333,625 1181,660 1205,659 1227,658 1266,656 1322,654 1327,674 1188,684 1212,683 1233,686 1272,684 1149,721 1218,761 1243,768 1288,764 1298,756 1322,772 1332,765 1192,778 1196,779 1187,785 1216,785 1222,787 1213,793 1241,796 1226,806 1270,804 1255,814 1292,826 1318,805 1334,795 1338,811 1309,816 1314,818 1320,814 1328,823 1335,819 1335,825 1318,835 1042,792 1035,802 1042,803 1035,811 1061,815 1076,798 1097,818 1111,805 1130,824 1144,811";
const DOTS = [...new Set([...POLYGONS, ...LINES, LOOSE].join(" ").split(" "))]
  .map((p) => p.split(",").map(Number))
  .filter(([x, y]) => x > 246 && x < 1344 && y > 128 && y < 1000);

function MapCanvas() {
  return (
    <svg viewBox="247 128 1097 873" preserveAspectRatio="xMinYMin slice" className="min-h-0 w-full flex-1 bg-white" shapeRendering="crispEdges" role="img" aria-label="Map">
      {POLYGONS.map((p) => <polygon key={p} points={p} fill="#d3ffbe" stroke="#000" />)}
      {LINES.map((p) => <polyline key={p} points={p} fill="none" stroke="#38701f" />)}
      {DOTS.map(([x, y]) => (
        <path key={`${x},${y}`} d={`M${x} ${y - 3}h1l2.500 2.500v1l-2.500 2.500h-1l-2.500-2.500v-1z`} fill="#0b1f5c" stroke="#02081f" shapeRendering="auto" />
      ))}
    </svg>
  );
}

/* ---------- trees ---------- */

function Expander({ open }) {
  return (
    <button aria-label={open ? "Collapse" : "Expand"} className="h-[9px] w-[9px] shrink-0">
      <svg width="9" height="9" viewBox="0 0 9 9" className="block" shapeRendering="crispEdges">
        <path d="M.5.5h8v8h-8z" fill="#fdfdfd" stroke="#919191" />
        <path d={open ? "M2 4.500h5" : "M2 4.500h5M4.500 2v5"} stroke="#2b4c9b" />
      </svg>
    </button>
  );
}

function Check({ id }) {
  return (
    <span className="grid h-[11px] w-[11px] shrink-0">
      <input id={id} type="checkbox" defaultChecked className="h-[11px] w-[11px] appearance-none border border-black bg-white [grid-area:1/1]" />
      <svg viewBox="0 0 11 11" className="pointer-events-none h-[11px] w-[11px] [grid-area:1/1]">
        <path d="M2.500 5l2 2.500 4-5" fill="none" stroke="#000" strokeWidth="1.800" />
      </svg>
    </span>
  );
}

const TocLayer = ({ id, name, pad, selected }) => (
  <li className={`flex h-[18px] items-center whitespace-nowrap ${pad}`}>
    <Expander open />
    <span className="ml-2 flex"><Check id={id} /></span>
    <label htmlFor={id} className={selected ? "ml-1.5 bg-[#0078d7] px-0.5 leading-[18px] text-white" : "ml-2 leading-[18px]"}>{name}</label>
  </li>
);

const PADS = ["pl-[7px]", "pl-[26px]", "pl-[45px]", "pl-[64px]", "pl-[83px]"];
const CATALOG = [
  [0, "+", "fHome", "Home - Documents\\ArcGIS"],
  [0, "-", "fConn", "Folder Connections"],
  [1, "-", "fLink", "H:\\Kartapplikationer\\ARC"],
  [2, "+", "folder", "testExport"],
  [2, "+", "gdb", "KalleGeodatabase.gdb"],
  [2, "+", "gdbHome", "New File Geodatabase.gdb", "bold"],
  [2, "+", "gdb", "test.gdb"],
  [2, "", "lyr", "asd.lyr"],
  [2, "", "shpPt", "Export_Output_111.shp"],
  [2, "", "shpLn", "Export_Output222.shp"],
  [2, "", "shpPly", "Export_Output333.shp"],
  [0, "+", "fBox", "Toolboxes"],
  [0, "+", "fServ", "Database Servers"],
  [0, "+", "fConn2", "Database Connections"],
  [0, "-", "fGis", "GIS Servers"],
  [1, "", "sBlue", "Add ArcGIS Server"],
  [1, "", "sGreen", "Add ArcIMS Server"],
  [1, "", "sWhite", "Add WCS Server"],
  [1, "", "sRed", "Add WMS Server"],
  [1, "", "sRed", "Add WMTS Server"],
  [1, "-", "wms", "GeoServer Web Map Service on localhost_8101", "selected"],
  [2, "-", "stackNet", "GeoServer Web Map Service"],
  [3, "-", "stack", "GeoServer Web Map Service"],
  ...[
    "A sample ArcGrid file", "lab4", "Manhattan (NY) landmarks", "Manhattan (NY) points of interest",
    "Manhattan (NY) roads", "mosaic", "North America sample imagery", "Pk50095", "Spearfish",
    "Spearfish archeological sites", "Spearfish bug locations", "Spearfish elevation",
    "Spearfish restricted areas", "Spearfish roads", "Spearfish streams", "Tasmania cities",
    "Tasmania roads", "Tasmania state boundaries", "Tasmania water bodies", "test_layer",
    "TIGER New York", "USA Population", "World rectangle",
  ].map((t) => [4, "", "layer", t]),
  [0, "+", "fCloud", "My Hosted Services"],
  [0, "+", "fCloud", "Ready-To-Use Services"],
];
const LABEL = {
  bold: "ml-1 px-px font-bold leading-[17px]",
  selected: "ml-1 bg-[#0078d7] px-px leading-[17px] text-white outline-1 outline-dotted -outline-offset-1 outline-[#3a2a10]",
};

function Toc() {
  return (
    <aside className="flex w-[245px] shrink-0 flex-col bg-[#f6f6f6]">
      <header className="mt-px mr-1 flex h-5 items-center bg-gradient-to-r from-[#b4c2d6] via-[#c6d6ea] to-[#d6e8fa] pl-[3px]">
        <h2 className="flex-1">Table Of Contents</h2>
        <button aria-label="Pin" className="mr-0.5"><Icon n="pin" s={14} /></button>
        <button aria-label="Close" className="mr-0.5"><Icon n="close" s={14} /></button>
      </header>
      <div className="flex h-[26px] items-center pl-[3px]">
        <Tools items={["*listBy", "listSource", "listVis", "listSel", "|", "options"]} />
      </div>
      <ul className="mr-1 flex-1 border-t border-r border-[#828790] bg-white pt-px">
        <li className="flex h-[18px] items-center pl-2 font-bold">
          <Expander open />
          <span className="mr-1 ml-1.5 flex"><Icon n="layers" /></span>Layers
        </li>
        <TocLayer id="l0" name="test_data" pad="pl-[27px]" />
        <TocLayer id="l1" name="test_data_osm_pt" pad="pl-[46px]" />
        <li className="flex h-[18px] items-center pl-20">
          <svg width="6" height="6" viewBox="0 0 6 6"><circle cx="3" cy="3" r="2.800" fill="#0b1a4a" /></svg>
        </li>
        <TocLayer id="l2" name="test_data_osm_ln" pad="pl-[46px]" />
        <li className="flex h-[18px] items-center pl-[78px]"><span className="h-px w-3.5 bg-[#38701f]" /></li>
        <TocLayer id="l3" name="test_data_osm_ply" pad="pl-[46px]" />
        <li className="flex h-[18px] items-center pl-[78px]"><span className="h-[11px] w-[15px] border border-black bg-[#d3ffbe]" /></li>
        <TocLayer id="l4" name="GeoServer Web Map Service" pad="pl-[46px]" selected />
        <li className="flex h-[18px] items-center pl-[69px]">
          <span className="mb-[9px] h-3 w-[13px] border-b border-l border-[#777]" />
          <Check id="l5" />
          <label htmlFor="l5" className="ml-2">lab4</label>
        </li>
      </ul>
    </aside>
  );
}

function Editor() {
  return (
    <div className="absolute top-[129px] left-[259px] flex w-[402px] flex-col border-2 border-[#8a8a8a] bg-white p-px">
      <div className="flex h-4 items-center bg-[#a3a3a3] pl-0.5 text-white">
        <span className="flex-1 leading-4">Editor</span>
        <Caret c="#fff" />
        <button aria-label="Close editor toolbar" className="mx-1">
          <svg width="10" height="10" viewBox="0 0 10 10"><path d="M1 1l8 8M9 1L1 9" stroke="#fff" strokeWidth="2.400" /></svg>
        </button>
      </div>
      <div className="flex h-[22px] items-center bg-[#f6f6f6] pl-[5px]">
        <button className="flex items-center gap-1">Editor<svg width="5" height="3" viewBox="0 0 5 3"><path d="M0 0h5L2.500 3z" /></svg></button>
        <span className="ml-0.5 flex flex-1 items-center">
          <Tools items={["|", "eArrow", "eText", "|", "eLine", "eArc", "ePoly", "w", "ePoint", "|", "eVert", "eReshape", "eCut", "eSplit", "eRotate", "|", "eAttr", "eSketch", "|", "eCreate"]} />
        </span>
      </div>
    </div>
  );
}

function Catalog() {
  return (
    <aside className="ml-1 flex w-[549px] shrink-0 flex-col bg-[#f6f6f6]">
      <header className="mt-px flex h-5 shrink-0 items-center bg-gradient-to-r from-[#98b4d8] via-[#a9c6e8] to-[#bcd3f2] pl-1">
        <h2 className="flex-1">Catalog</h2>
        <button aria-label="Pin catalog" className="mr-0.5"><Icon n="pinSide" s={14} /></button>
        <button aria-label="Close catalog" className="mr-0.5"><Icon n="close" s={14} /></button>
      </header>
      <div className="flex h-[27px] shrink-0 items-center gap-px bg-[#fafafa] pl-1">
        <Tools items={["cBack", "v", "cFwd", "cUp", "cHome", "cGdb", "||", "table", "w", "||", "connect", "||", "treeView", "||", "options"]} />
      </div>
      <div className="flex h-[22px] shrink-0 items-center pr-1 pl-0.5">
        <label htmlFor="location" className="w-[52px]">Location:</label>
        <div className="flex h-[22px] flex-1 items-center border border-[#7a7a7a] bg-white pl-0.5">
          <Icon n="wms" />
          <select id="location" className="ml-1 h-5 flex-1 appearance-none outline-none">
            <option>GeoServer Web Map Service on localhost_8101</option>
          </select>
          <Icon n="chevron" />
        </div>
      </div>
      <ul className="mt-0.5 mr-1 mb-1 min-h-0 flex-1 overflow-hidden border-t-2 border-r border-b border-l-2 border-t-[#6e6e6e] border-r-[#e3e3e3] border-b-[#e3e3e3] border-l-[#6e6e6e] bg-white">
        {CATALOG.map(([d, x, icon, text, kind], i) => (
          <li key={i} className={`flex h-[17px] items-center whitespace-nowrap ${PADS[d]}`}>
            {x ? <Expander open={x === "-"} /> : <span className="w-[9px]" />}
            <span className="ml-1.5 flex"><Icon n={icon} /></span>
            <span className={LABEL[kind] || "ml-1 px-px leading-[17px]"}>{text}</span>
          </li>
        ))}
      </ul>
    </aside>
  );
}

export default function App() {
  return (
    <div className="flex h-screen min-h-[600px] flex-col overflow-hidden bg-white font-['Roboto',sans-serif] text-xs text-black select-none">
      <header className="flex h-[23px] shrink-0 items-center pl-px">
        <Icon n="app" />
        <h1 className="ml-1 flex-1">test_data - ArcMap</h1>
        <div className="flex">
          <button aria-label="Minimize" className="flex w-[46px] justify-center"><svg width="10" height="10" viewBox="0 0 10 10"><path d="M0 5.500h10" stroke="#000" /></svg></button>
          <button aria-label="Restore" className="flex w-[46px] justify-center"><svg width="10" height="10" viewBox="0 0 10 10"><path d="M.5 2.500h7v7h-7zM2.500 2.500v-2h7v7h-2" fill="none" stroke="#000" /></svg></button>
          <button aria-label="Close window" className="flex w-[46px] justify-center"><svg width="10" height="10" viewBox="0 0 10 10"><path d="M0 0l10 10M10 0L0 10" stroke="#000" /></svg></button>
        </div>
      </header>

      <div className="mr-[636px] flex h-[102px] shrink-0 flex-col bg-[#f7f7f7]">
        <nav className="flex h-[26px] items-center gap-[15px] pl-[11px]">
          {["File", "Edit", "View", "Bookmarks", "Insert", "Selection", "Geoprocessing", "Customize", "Windows", "Help"].map((m) => (
            <button key={m}>{m}</button>
          ))}
        </nav>
        <div className="flex h-[24px] w-max items-center bg-gradient-to-b from-white to-[#f7f7f7] pl-1">
          <Grip />
          <Tools items={["fresh", "open", "save", "print", "|", "cut", "copy", "paste", "del", "|", "undo", "redo", "|", "add", "v", "|"]} />
          <div className="flex h-[21px] w-[147px] items-center border border-[#7a7a7a] bg-white pl-0.5">
            <select aria-label="Map scale" className="flex-1 appearance-none outline-none"><option>1:3,000</option></select>
            <Icon n="chevron" />
          </div>
          <Tools items={["|", "*editorToggle", "|", "winToc", "winCat", "winSearch", "winBox", "winPy", "|", "model"]} />
          <Overflow />
        </div>
        <div className="ml-[655px] flex h-[27px] w-max items-center bg-gradient-to-b from-white to-[#f7f7f7] pl-px">
          <Grip />
          <Tools items={["pzin", "pzout", "pHand", "pFull", "pOne", "|", "pIn", "pOut", "|", "pBack", "pFwd"]} />
          <div className="flex h-5 w-[60px] items-center justify-between border border-[#cfcfcf] bg-white pl-0.5">
            <input aria-label="Layout zoom" defaultValue="100%" disabled className="h-3.5 w-[28px] bg-[#0078d7] text-[11px] text-[#3d5f8f]" />
            <Icon n="chevron" />
          </div>
          <Tools items={["|", "*draft", "focus", "change", "ddp"]} />
          <Overflow />
        </div>
        <div className="flex h-[25px] w-max items-center bg-gradient-to-b from-white to-[#f7f7f7] pl-1">
          <Grip />
          <Tools items={["zin", "zout", "*hand", "globe", "|", "fin", "fout", "|", "backBlue", "fwdGrey", "|", "selFeat", "v", "clearSel", "|", "pointer", "|", "info", "bolt", "popup", "|", "measure", "|", "bino", "route", "xy", "|", "time", "|", "viewer"]} />
          <Overflow />
        </div>
      </div>

      <div className="relative flex min-h-0 flex-1">
        <Toc />
        <main className="relative mt-px flex min-w-0 flex-1 flex-col border-t-2 border-l-2 border-[#7a7a7a] bg-[#f6f6f6]">
          <MapCanvas />
          <div className="flex h-[18px] shrink-0 items-start border-t border-[#e0e0e0]">
            <button aria-label="Data view" className="flex h-4 w-[17px] items-center justify-center border border-[#99c9ef] bg-[#cce4f7]"><Icon n="dataView" s={11} /></button>
            <button aria-label="Layout view" className="flex h-4 w-[17px] items-center justify-center"><Icon n="layoutView" s={11} /></button>
            <Sep wide />
            <button aria-label="Refresh" className="flex h-4 w-[17px] items-center justify-center"><Icon n="refresh" s={11} /></button>
            <button aria-label="Pause drawing" className="flex h-4 w-[17px] items-center justify-center"><Icon n="pause" s={11} /></button>
            <button aria-label="Scroll left" className="flex h-4 w-[17px] items-center justify-center"><Icon n="left" s={11} /></button>
            <span className="flex flex-1 justify-end pt-px pr-[47px]"><span className="h-3.5 w-[17px] bg-[#cdcdcd]" /></span>
          </div>
          <Editor />
        </main>
        <Catalog />
        <nav className="ml-[3px] flex w-4 shrink-0 flex-col pt-1 text-[#777]">
          {[["winCat", "Catalog"], ["winSearch", "Search"]].map(([ic, t]) => (
            <button key={t} className="flex flex-col items-center gap-1 rounded-l border border-r-0 border-[#8a8a8a] bg-[#f6f6f6] py-1 font-['Liberation_Sans',sans-serif] text-[13px] leading-[15px]">
              <Icon n={ic} s={15} />
              <span className="[writing-mode:vertical-rl]">{t}</span>
            </button>
          ))}
        </nav>

        <p className="absolute top-[327px] left-[133px] font-['Open_Sans',sans-serif] text-sm text-[#e81010]">Drog över lab4 från Geoserver WMS lagret hit</p>
        <svg className="pointer-events-none absolute top-[236px] left-[115px]" width="86" height="82" viewBox="0 0 86 82">
          <path d="M82 79L10 10" stroke="#fb0505" strokeWidth="2.600" />
          <path d="M2 2l13 5.500-7 6.500z" fill="#fb0505" />
        </svg>
        <p className="absolute top-[378px] right-[89px] font-['Open_Sans',sans-serif] text-sm text-[#e81010]">Lagg till en WMS här.</p>
        <svg className="pointer-events-none absolute top-[406px] right-[176px]" width="76" height="22" viewBox="0 0 76 22">
          <path d="M73 4L10 15" stroke="#fb0505" strokeWidth="2.600" />
          <path d="M3 16.500l13.500-7 1.800 8.500z" fill="#fb0505" />
        </svg>
      </div>

      <footer className="flex h-[22px] shrink-0 items-center justify-end border-b border-[#2a2a2a] bg-[#f6f6f6] pr-[87px]">
        <span className="whitespace-pre">21.239  64.691 Decimal Degrees</span>
      </footer>
    </div>
  );
}
